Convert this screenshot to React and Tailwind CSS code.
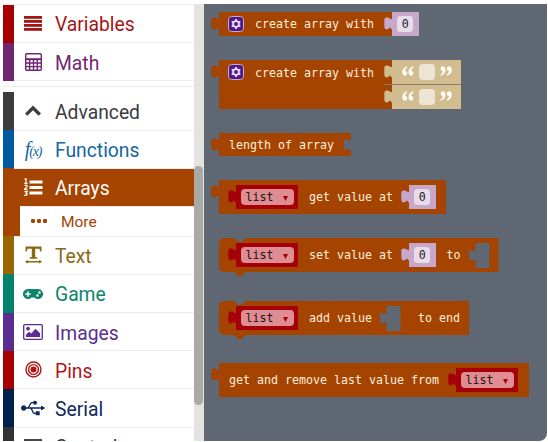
import React from "react";
import { FaGamepad, FaUsb } from "react-icons/fa";

const ORANGE = "#a54300";
const CANVAS = "#5f6773";

const stroke = { fill: "none", stroke: "currentColor" };

const LinesIcon = () => (
  <svg width="18" height="15" viewBox="0 0 18 15" fill="currentColor">
    {[0, 4, 8, 12].map((y) => <rect key={y} y={y} width="18" height="2.8" />)}
  </svg>
);

const CalcIcon = () => (
  <svg width="17" height="18" viewBox="0 0 17 18" {...stroke} strokeWidth="1.4">
    <rect x=".7" y=".7" width="15.6" height="16.6" rx="1.2" />
    <path d="M1 6.2h15" strokeWidth="2" />
    <path d="M1 10h15M1 13.6h15M4.6 6v11M8.5 6v11M12.3 6v11" />
  </svg>
);

const ChevronIcon = () => (
  <svg width="16" height="11" viewBox="0 0 16 11" {...stroke} strokeWidth="3.4">
    <path d="M1.2 9.6L8 2.8l6.800 6.800" />
  </svg>
);

const FxIcon = () => (
  <span className="font-['Liberation_Serif',serif] italic text-[20px] leading-none tracking-[-1px] whitespace-nowrap">
    f<span className="text-[14px] tracking-[-1.2px]">(x)</span>
  </span>
);

const ListIcon = () => (
  <svg width="19" height="19" viewBox="0 0 19 19" fill="currentColor">
    <rect x="5.500" y="2.500" width="13" height="3" />
    <rect x="5.500" y="8" width="13" height="3" />
    <rect x="5.500" y="13.500" width="13" height="3" />
    <path d="M.5 1.300l1.500-.6v4.500M.3 5.300h3.300M.4 7.500c3-1.200 3.500.5 1.800 2L.6 11.300h3M.5 13.300h2.800l-1.500 1.700c2.500.2 1.600 3-1.500 2.200" fill="none" stroke="currentColor" strokeWidth="1.200" />
  </svg>
);

const TextIcon = () => (
  <svg width="17" height="18" viewBox="0 0 17 18" fill="currentColor">
    <path d="M.5.500h16v5h-1.300l-.8-2.700H10.200v8.200l2.300.6v1.100h-8v-1.100l2.300-.6V2.800H2.600l-.8 2.700H.5z" />
    <path d="M0 15.800l2.800-2v1.200h11.400v-1.200l2.800 2-2.800 2v-1.200H2.800v1.200z" />
  </svg>
);

const ImageIcon = () => (
  <svg width="20" height="16" viewBox="0 0 20 16" fill="currentColor">
    <rect x=".7" y=".7" width="18.600" height="14.600" rx="1" {...stroke} strokeWidth="1.300" />
    <circle cx="5" cy="4.700" r="1.900" />
    <path d="M3 13v-2.500l3.200-2.800 2 1.800 4.300-4.800 4.600 4.600V13z" />
  </svg>
);

const TargetIcon = () => (
  <svg width="17" height="17" viewBox="0 0 17 17" {...stroke} strokeWidth="1.400">
    <circle cx="8.500" cy="8.500" r="7.500" />
    <circle cx="8.500" cy="8.500" r="4.900" />
    <circle cx="8.500" cy="8.500" r="2.300" fill="currentColor" />
  </svg>
);

const ControlIcon = () => (
  <svg width="18" height="15" viewBox="0 0 18 15" {...stroke} strokeWidth="1.800">
    <rect x="1" y="1" width="16" height="13" />
    <path d="M12 4h3M12 7h3" />
  </svg>
);

const UsbIcon = () => <FaUsb size={24} className="shrink-0" />;
const PadIcon = () => <FaGamepad size={20} className="shrink-0" />;

function Category({ bar, text, icon: Icon, label, selected }) {
  return (
    <div className={`flex h-[38.2px] shrink-0 items-center border-b border-[#ededed] ${selected ? "bg-[#a54300]" : "bg-white"}`}>
      <span className={`h-[38.2px] w-[11px] shrink-0 ${bar}`} />
      <span className={`flex w-[38px] shrink-0 items-center justify-center ${text}`}><Icon /></span>
      <span className={`ml-[3px] pt-[3px] text-[19.300px] leading-none ${text}`}>{label}</span>
    </div>
  );
}

function Sidebar() {
  return (
    <div className="flex h-[437px] w-[191px] shrink-0 flex-col overflow-hidden border-t border-[#ededed] bg-white font-[Roboto,sans-serif]">
      <Category bar="bg-[#a80000]" text="text-[#a51616]" icon={LinesIcon} label="Variables" />
      <Category bar="bg-[#712672]" text="text-[#712672]" icon={CalcIcon} label="Math" />
      <div className="mb-[5px] h-[6px] shrink-0 border-b border-[#ededed]" />
      <Category bar="bg-[#3c3c3c]" text="text-[#3c3c3c]" icon={ChevronIcon} label="Advanced" />
      <Category bar="bg-[#005a9e]" text="text-[#1565a3]" icon={FxIcon} label="Functions" />
      <Category bar="bg-[#a54300]" text="text-white" icon={ListIcon} label="Arrays" selected />
      <div className="flex h-[29.800px] shrink-0 items-center border-b border-[#ededed] text-[#a54300]">
        <span className="h-[29.800px] w-[17px] shrink-0 bg-[#a54300]" />
        <svg className="ml-[11px]" width="16" height="4" viewBox="0 0 16 4" fill="currentColor">
          <rect width="4" height="4" rx="1.300" /><rect x="6" width="4" height="4" rx="1.300" /><rect x="12" width="4" height="4" rx="1.300" />
        </svg>
        <span className="ml-[14px] pt-[3px] text-[15.500px] leading-none">More</span>
      </div>
      <Category bar="bg-[#996600]" text="text-[#8a6914]" icon={TextIcon} label="Text" />
      <Category bar="bg-[#05826b]" text="text-[#0c846c]" icon={PadIcon} label="Game" />
      <Category bar="bg-[#5c2d91]" text="text-[#5c2d91]" icon={ImageIcon} label="Images" />
      <Category bar="bg-[#a80000]" text="text-[#b01414]" icon={TargetIcon} label="Pins" />
      <Category bar="bg-[#002050]" text="text-[#0f2a58]" icon={UsbIcon} label="Serial" />
      <Category bar="bg-[#333333]" text="text-[#333333]" icon={ControlIcon} label="Control" />
    </div>
  );
}

const TAB = "M8.200 5.500V7.200C5.500 7.200 5.800 5.600 2.500 5.600Q.3 5.600.3 8v5.500Q.3 17.500 2.500 17.500 5 17.500 5.500 15.500 7 16.200 8.200 18z";
const Tab = ({ color }) => (
  <svg className="w-[8px] shrink-0 self-start" width="8" height="24" viewBox="0 0 8 24"><path d={TAB} fill={color} /></svg>
);

const Hole = () => (
  <svg className="shrink-0" width="22" height="25" viewBox="0 0 22 25">
    <path d="M7.500 0H21.500V25H7.500V17.500Q6 15.500 4.500 17 3.500 18 2 17 .8 16 .8 13V8Q1 6 3 7.500 6 9 7.500 7z" fill={CANVAS} />
  </svg>
);

const Label = ({ children, className = "" }) => (
  <span className={`whitespace-pre pt-[2px] text-[11.630px] leading-none text-[#fff0dc] ${className}`}>{children}</span>
);

const NumberBlock = () => (
  <span className="flex h-[24px] shrink-0">
    <Tab color="#c7a8cb" />
    <span className="flex h-[24px] w-[26.500px] items-center justify-center bg-[#c7a8cb]">
      <span className="flex h-[16px] w-[16px] items-center justify-center rounded-[3.500px] bg-[#e8dcea] pt-[2px] text-[11.630px] leading-none text-[#222]">0</span>
    </span>
  </span>
);

const Quote = ({ className = "" }) => (
  <svg className={`mb-[3px] shrink-0 ${className}`} width="12" height="10" viewBox="0 0 12 10" fill="#fffdf5">
    <path d="M5 .3Q.3 2 .3 6.300C.3 8.500 1.400 9.700 3 9.700A2.300 2.300 0 0 0 5.200 7.300C5.200 6 4.300 5.200 3 5.100Q3 2.800 5.400 1.300z" />
    <path d="M11.200.3Q6.500 2 6.500 6.300C6.500 8.500 7.600 9.700 9.200 9.700A2.300 2.300 0 0 0 11.400 7.300C11.400 6 10.500 5.200 9.200 5.100Q9.200 2.800 11.600 1.300z" />
  </svg>
);

const TextBlock = () => (
  <span className="flex h-[24px] shrink-0">
    <Tab color="#d2bd90" />
    <span className="flex h-[24px] w-[69px] items-center justify-center gap-[5px] bg-[#d2bd90]">
      <Quote />
      <span className="h-[16px] w-[16px] rounded-[4px] bg-[#ede5d3]" />
      <Quote className="rotate-180" />
    </span>
  </span>
);

const ListBlock = () => (
  <span className="flex h-[24px] shrink-0">
    <Tab color="#a50008" />
    <span className="flex h-[24px] w-[62px] items-center bg-[#a50008] pl-[4.500px]">
      <span className="flex h-[16px] w-[53px] items-center rounded-[4px] bg-[#df8d92] pl-[5px] pt-[2px] text-[11.630px] leading-none text-[#241010]">
        list
        <svg className="ml-[9px]" width="5" height="5" viewBox="0 0 6 6"><path d="M0 0h6L3 6z" fill="#a50008" /></svg>
      </span>
    </span>
  </span>
);

const Gear = () => (
  <svg className="shrink-0" width="16" height="16" viewBox="0 0 16 16">
    <rect x=".5" y=".5" width="15" height="15" rx="3" fill="#511b8c" stroke="#c9a5c4" />
    <g stroke="#e9dcf5" fill="none">
      <circle cx="8" cy="8" r="2.900" strokeWidth="1.800" />
      <path d="M8 3v2M8 11v2M3.700 5.500l1.700 1M10.600 9.500l1.700 1M3.700 10.500l1.700-1M10.600 6.500l1.700-1" strokeWidth="1.900" />
    </g>
  </svg>
);

// Value blocks carry a left plug; their contents flow from the body's left edge.
function ValueBlock({ className, children }) {
  return (
    <div className={`flex shrink-0 ${className}`}>
      <Tab color={ORANGE} />
      <div className="flex h-full flex-1 items-center bg-[#a54300]">{children}</div>
    </div>
  );
}

// Statement blocks have a notch above and a bump below.
function StatementBlock({ width, className, children }) {
  const d = `M0 6Q0 0 6 0H14Q16 0 17 1.500L19 3.500Q21 5 23 3.500L25 1.500Q26 0 28 0H${width}V34H28Q26.500 34 25.500 35L23 37.500Q21 39 19 37.500L16.500 35Q15.500 34 14 34H6Q0 34 0 28z`;
  return (
    <div className={`relative ml-[8px] flex h-[34px] shrink-0 items-center ${className}`}>
      <svg className="absolute left-0 top-0" width={width} height="39" viewBox={`0 0 ${width} 39`}><path d={d} fill={ORANGE} /></svg>
      <div className="relative flex items-center">{children}</div>
    </div>
  );
}

function Flyout() {
  return (
    <div className="flex h-[437px] w-[343px] shrink-0 flex-col overflow-hidden rounded-br-[8px] bg-[#5f6773] pl-[7px] font-['DejaVu_Sans_Mono',monospace]">
      <ValueBlock className="mt-[8px] h-[24px] w-[207px]">
        <span className="ml-[9px] flex"><Gear /></span>
        <Label className="ml-[11px] w-[129px]">create array with</Label>
        <NumberBlock />
      </ValueBlock>
      <ValueBlock className="mt-[24px] h-[49px] w-[249px]">
        <span className="ml-[9px] flex h-full pt-[4px]"><Gear /></span>
        <Label className="ml-[11px] w-[129px] self-start pt-[8px]">create array with</Label>
        <span className="flex h-[49px] flex-col gap-px bg-[#8c7c66] [clip-path:inset(0)]">
          <span className="flex bg-[#a54300]"><TextBlock /></span>
          <span className="flex bg-[#a54300]"><TextBlock /></span>
        </span>
      </ValueBlock>
      <div className="mt-[24px] flex h-[23px] w-[140px] shrink-0">
        <Tab color={ORANGE} />
        <div className="flex h-full flex-1 items-center justify-between bg-[#a54300]">
          <Label className="ml-[10px] pt-[3px]">length of array</Label>
          <svg width="8" height="23" viewBox="0 0 8 23"><path d="M8 5.500V7Q6 8 4 6.500 1 5 1 8V14Q1 18 4 17 6 15 8 18z" fill={CANVAS} /></svg>
        </div>
      </div>
      <ValueBlock className="mt-[24px] h-[34px] w-[235px]">
        <span className="ml-[9px] flex"><ListBlock /></span>
        <Label className="ml-[11px] w-[92px]">get value at</Label>
        <NumberBlock />
      </ValueBlock>
      <StatementBlock width={279.5} className="mt-[24px]">
        <span className="ml-[9px] flex"><ListBlock /></span>
        <Label className="ml-[11px] w-[92px]">set value at</Label>
        <NumberBlock />
        <Label className="ml-[11px] w-[21px]">to</Label>
        <Hole />
      </StatementBlock>
      <StatementBlock width={250} className="mt-[29px]">
        <span className="ml-[9px] flex"><ListBlock /></span>
        <Label className="ml-[11px] w-[70px]">add value</Label>
        <Hole />
        <Label className="ml-[17px]">to end</Label>
      </StatementBlock>
      <ValueBlock className="mt-[28px] h-[34px] w-[318px]">
        <Label className="ml-[10px] w-[219px]">get and remove last value from</Label>
        <ListBlock />
      </ValueBlock>
    </div>
  );
}

export default function App() {
  return (
    <div className="flex h-[442px] w-[548px] overflow-hidden bg-white pl-[3px] pt-[4px]">
      <Sidebar />
      <div className="h-[437px] w-[10px] shrink-0 bg-[#e3e3e2] pt-[162px]">
        <div className="h-[239px] w-[9px] rounded-full bg-[#a9a9a8]" />
      </div>
      <Flyout />
    </div>
  );
}
